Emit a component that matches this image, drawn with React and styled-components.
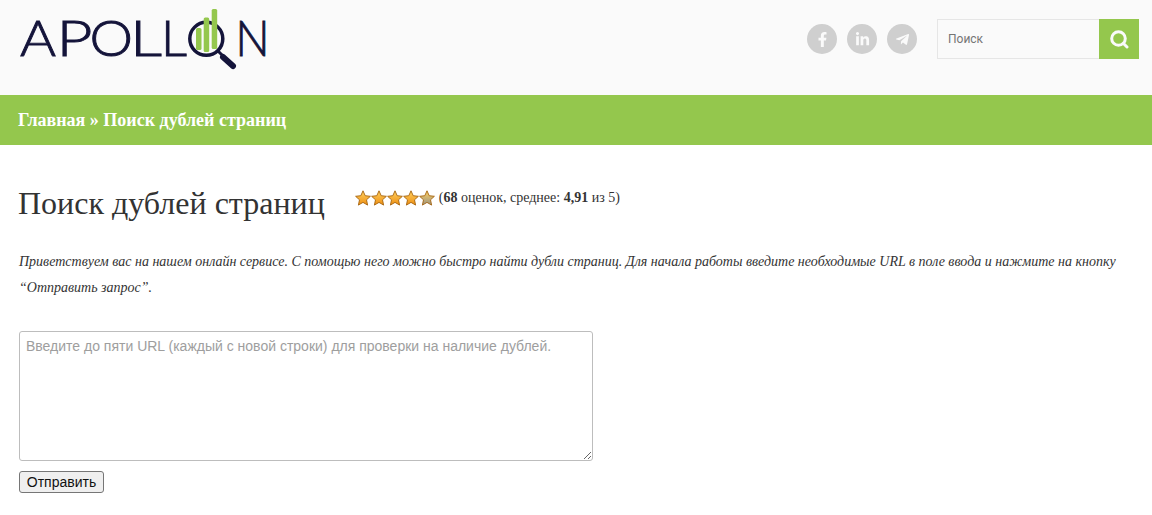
import React from 'react';
import styled, { createGlobalStyle } from 'styled-components';
import { FaFacebookF, FaLinkedinIn, FaTelegramPlane } from 'react-icons/fa';

const GlobalStyle = createGlobalStyle`
html, body {
  margin: 0;
  padding: 0;
  background: #fff;
  overflow: hidden;
}
body {
  font-family: "Liberation Serif", "Times New Roman", serif;
  color: #333;
}
`;

const Header = styled.header`
height: 95px;
background: #fafafa;
display: flex;
align-items: flex-start;
justify-content: space-between;
padding: 0 13px 0 18px;
box-sizing: border-box;
`;

const LogoHolder = styled.a`
display: block;
width: 262px;
height: 72px;
margin-top: 4px;
`;

const HeaderRight = styled.div`
display: flex;
align-items: center;
margin-top: 19px;
`;

const Socials = styled.div`
display: flex;
gap: 10px;
margin-right: 20px;
`;

const SocialLink = styled.a`
width: 30px;
height: 30px;
border-radius: 50%;
background: #cfcfcf;
color: #fafafa;
display: flex;
align-items: center;
justify-content: center;
font-size: 15px;
`;

const SearchForm = styled.form`
display: flex;
width: 202px;
height: 40px;
`;

const SearchInput = styled.input`
flex: 1;
min-width: 0;
box-sizing: border-box;
height: 40px;
border: 1px solid #e6e6e6;
border-right: 0;
background: #fafafa;
padding: 0 10px;
font-family: Roboto, sans-serif;
font-size: 12px;
outline: none;

&::placeholder {
  color: #757575;
  opacity: 1;
}
`;

const SearchButton = styled.button`
width: 40px;
height: 40px;
border: 0;
padding: 0;
background: #94c74d;
display: flex;
align-items: center;
justify-content: center;
`;

const Breadcrumbs = styled.nav`
height: 50px;
background: #94c74d;
color: #fff;
display: flex;
align-items: center;
padding-left: 18px;
font-size: 18px;
font-weight: 700;
`;

const Main = styled.main`
padding: 0 19px;
`;

const TitleRow = styled.div`
display: flex;
align-items: flex-start;
height: 76px;
padding-top: 41px;
box-sizing: border-box;
`;

const Title = styled.h1`
margin: 0 0 0 -1px;
font-size: 32px;
line-height: 34px;
font-weight: 400;
color: #333;
`;

const Rating = styled.div`
display: flex;
align-items: center;
margin-left: 30px;
margin-top: 2px;
height: 20px;
font-size: 14px;
color: #333;
`;

const Stars = styled.div`
display: flex;
width: 80px;
margin-right: 4px;
`;

const Intro = styled.p`
margin: 28px 0 0;
font-size: 14px;
line-height: 26px;
font-style: italic;
color: #333;
width: 1105px;
`;

const Form = styled.form`
margin-top: 30px;
display: flex;
flex-direction: column;
align-items: flex-start;
`;

const UrlArea = styled.textarea`
width: 574px;
height: 130px;
box-sizing: border-box;
display: block;
border: 1px solid #bdbdbd;
border-radius: 3px;
padding: 5px 6px;
font-family: "Liberation Sans", Arial, sans-serif;
font-size: 14px;
line-height: 18px;
background: #fff;
outline: none;

&::placeholder {
  color: #9e9e9e;
  opacity: 1;
}
`;

const SubmitButton = styled.button`
margin-top: 10px;
width: 85px;
height: 22px;
padding: 0;
box-sizing: border-box;
border: 1px solid #767676;
border-radius: 3px;
background: #efefef;
color: #111;
font-family: "Liberation Sans", Arial, sans-serif;
font-size: 14px;
`;

const logoLetters = [
  { ch: 'A', x: 20, w: 36 },
  { ch: 'P', x: 56.5, w: 36 },
  { ch: 'O', x: 89.5, w: 43.5 },
  { ch: 'L', x: 130, w: 32 },
  { ch: 'L', x: 161, w: 26 },
  { ch: 'N', x: 235.5, w: 34 },
];

const Logo = () => (
  <svg width="262" height="72" viewBox="18 4 262 72">
    {logoLetters.map((l, i) => (
      <text
        key={i}
        x={l.x}
        y="56"
        fontFamily="Lato, sans-serif"
        fontWeight="300"
        fontSize="50"
        fill="#14143a"
        stroke="#14143a"
        strokeWidth="0.9"
        textLength={l.w}
        lengthAdjust="spacingAndGlyphs"
      >
        {l.ch}
      </text>
    ))}
    <circle cx="206.3" cy="38.8" r="16.5" fill="none" stroke="#14143a" strokeWidth="3.5" />
    <rect x="196" y="28" width="5.5" height="22" rx="1.5" fill="#94c74d" />
    <rect x="203.7" y="17.5" width="5.5" height="34.5" rx="1.5" fill="#94c74d" />
    <rect x="211.7" y="9" width="5.5" height="40" rx="1.5" fill="#94c74d" />
    <path d="M218 51l5 5" stroke="#14143a" strokeWidth="3" />
    <path d="M223 57l10 9" stroke="#14143a" strokeWidth="6" strokeLinecap="round" />
  </svg>
);

const Star = ({ grey }) => (
  <svg width="16" height="16" viewBox="0 0 16 16">
    <defs>
      <linearGradient id={grey ? 'starGrey' : 'starGold'} x1="0" y1="0" x2="0" y2="1">
        <stop offset="0" stopColor="#ffd060" />
        <stop offset="1" stopColor={grey ? '#9a9484' : '#ee8f12'} />
      </linearGradient>
    </defs>
    <path
      d="M8 .8l2.2 4.9 5.2.6-3.9 3.5 1.1 5.3L8 12.4l-4.6 2.7 1.1-5.3L.6 6.3l5.2-.6z"
      fill={`url(#${grey ? 'starGrey' : 'starGold'})`}
      stroke="#a5630f"
      strokeWidth="0.9"
    />
  </svg>
);

const App = () => (
  <>
    <GlobalStyle />
    <Header>
      <LogoHolder><Logo /></LogoHolder>
      <HeaderRight>
        <Socials>
          <SocialLink><FaFacebookF /></SocialLink>
          <SocialLink><FaLinkedinIn /></SocialLink>
          <SocialLink><FaTelegramPlane /></SocialLink>
        </Socials>
        <SearchForm>
          <SearchInput placeholder="Поиск" />
          <SearchButton type="button">
            <svg width="20" height="20" viewBox="0 0 20 20" fill="none" stroke="#fafafa">
              <circle cx="9.5" cy="9.5" r="6.8" strokeWidth="3" />
              <path d="M14.5 14.5l3.5 3.5" strokeWidth="3" strokeLinecap="round" />
            </svg>
          </SearchButton>
        </SearchForm>
      </HeaderRight>
    </Header>
    <Breadcrumbs>Главная » Поиск дублей страниц</Breadcrumbs>
    <Main>
      <TitleRow>
        <Title>Поиск дублей страниц</Title>
        <Rating>
          <Stars>
            <Star /><Star /><Star /><Star /><Star grey />
          </Stars>
          <span>(<b>68</b> оценок, среднее: <b>4,91</b> из 5)</span>
        </Rating>
      </TitleRow>
      <Intro>
        Приветствуем вас на нашем онлайн сервисе. С помощью него можно быстро найти дубли страниц. Для начала работы введите необходимые URL в поле ввода и нажмите на кнопку “Отправить запрос”.
      </Intro>
      <Form>
        <UrlArea placeholder="Введите до пяти URL (каждый с новой строки) для проверки на наличие дублей." />
        <SubmitButton type="button">Отправить</SubmitButton>
      </Form>
    </Main>
  </>
);

export default App;
